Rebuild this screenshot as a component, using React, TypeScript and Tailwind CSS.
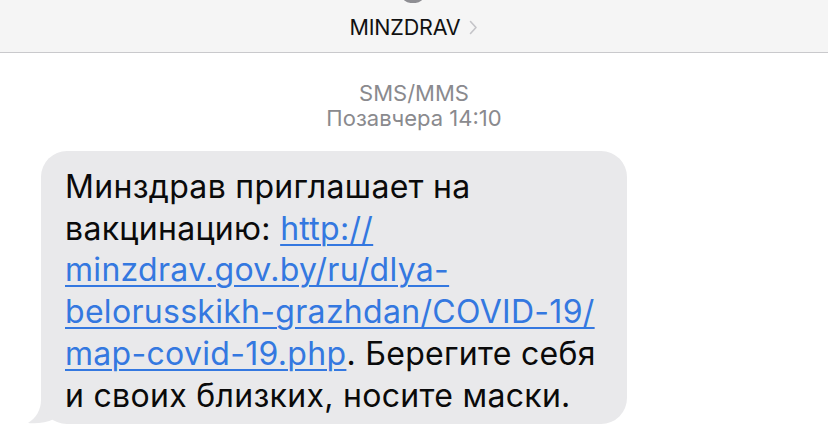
const Link = ({ children }: { children: React.ReactNode }) => (
    <span className="text-[#3478e0] underline decoration-[1.5px] underline-offset-[4px]">{children}</span>
)

export default function App() {
    return (
        <div className="w-[828px] h-[448px] bg-white overflow-hidden" style={{ fontFamily: "Inter, 'Liberation Sans', sans-serif" }}>
            {/* header */}
            <div className="relative h-[53px] bg-[#f5f5f5] border-b-[1.5px] border-[#c9c9cc] flex items-center justify-center">
                <div className="absolute left-[402px] top-[-14px] w-[22px] h-[17px] rounded-full border-b-[3px] border-[#8e8e93]" />
                <div className="flex items-center gap-[9px] pl-[0px] pt-[2px]">
                    <span className="text-[21.5px] text-[#111] tracking-[-0.2px]">MINZDRAV</span>
                    <svg width="9" height="15" viewBox="0 0 9 15" className="mt-[1px]">
                        <path d="M1.5 1.5 L7 7.5 L1.5 13.5" fill="none" stroke="#c4c4c8" strokeWidth="1.6" strokeLinecap="round" strokeLinejoin="round" />
                    </svg>
                </div>
            </div>

            {/* meta */}
            <div className="flex flex-col items-center pt-[28px] text-[#8a8a8e] text-[22px] leading-[25px]">
                <span>SMS/MMS</span>
                <span>Позавчера 14:10</span>
            </div>

            {/* bubble */}
            <div className="relative ml-[41px] mt-[20px] w-[586px]">
                <svg className="absolute left-[-15px] bottom-0" width="40" height="30" viewBox="0 0 40 30">
                    <path d="M15 0 L15 6 C15 16 10 24 2 29 C10 30 20 29 28 25 L40 25 L40 0 Z" fill="#e9e9eb" />
                </svg>
                <div className="relative bg-[#e9e9eb] rounded-[26px] h-[273px] pl-[24px] pt-[15px] text-[32px] leading-[41.7px] text-[#0a0a0a] tracking-[0.3px]">
                    <div className="whitespace-nowrap">Минздрав приглашает на</div>
                    <div className="whitespace-nowrap">вакцинацию: <Link>http://</Link></div>
                    <div className="whitespace-nowrap"><Link>minzdrav.gov.by/ru/dlya-</Link></div>
                    <div className="whitespace-nowrap"><Link>belorusskikh-grazhdan/COVID-19/</Link></div>
                    <div className="whitespace-nowrap"><Link>map-covid-19.php</Link>. Берегите себя</div>
                    <div className="whitespace-nowrap">и своих близких, носите маски.</div>
                </div>
            </div>
        </div>
    )
}
